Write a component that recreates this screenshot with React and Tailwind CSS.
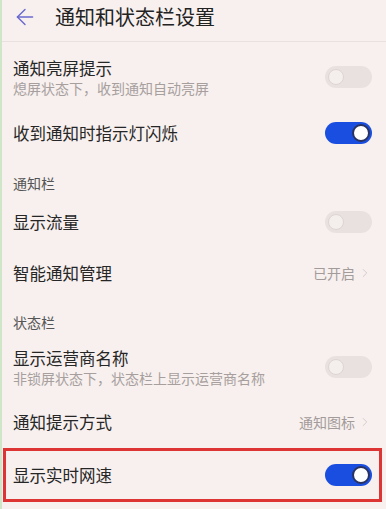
import { ArrowLeft, ChevronRight } from 'lucide-react';

function Toggle({ on }) {
  return on ? (
    <div className="w-[47px] h-[22px] rounded-full bg-[#1a4ee0] flex items-center justify-end pr-[2px]">
      <div className="w-[18px] h-[18px] rounded-full bg-white border-[2px] border-[#2a3360]" />
    </div>
  ) : (
    <div className="w-[47px] h-[22px] rounded-full bg-[#e9e1e0] flex items-center pl-[3px]">
      <div className="w-[16px] h-[16px] rounded-full bg-[#f4eeed] border border-[#ddd5d4]" />
    </div>
  );
}

function Row({ title, sub, right, h }) {
  return (
    <div className={`flex items-center justify-between pl-[11px] pr-[14px] ${h}`}>
      <div className="flex flex-col">
        <span className="text-[16.5px] leading-[22px] text-[#262626]">{title}</span>
        {sub && <span className="text-[14px] leading-[18px] text-[#a79f9e]">{sub}</span>}
      </div>
      {right}
    </div>
  );
}

function Value({ text }) {
  return (
    <div className="flex items-center gap-[3px] text-[14px] text-[#a39b9a]">
      <span>{text}</span>
      <ChevronRight size={14} strokeWidth={1.5} className="text-[#cfc7c6]" />
    </div>
  );
}

export default function App() {
  return (
    <div
      className="w-[386px] h-[509px] bg-[#f7f0ee] border-l-[2px] border-[#cfe6c9] overflow-hidden"
      style={{ fontFamily: '"Noto Sans CJK SC", "Noto Sans", sans-serif' }}
    >
      {/* header */}
      <div className="h-[42px] flex items-center pb-[8px] pl-[10px] border-b border-[#e9e1df]">
        <ArrowLeft size={26} strokeWidth={1.3} className="text-[#6b68cf]" />
        <span className="ml-[17px] text-[20px] text-[#222]">通知和状态栏设置</span>
      </div>

      <Row h="h-[70px]" title="通知亮屏提示" sub="熄屏状态下，收到通知自动亮屏" right={<Toggle />} />
      <Row h="h-[42px]" title="收到通知时指示灯闪烁" right={<Toggle on />} />

      <div className="h-[44px] flex items-end pb-[5px] pl-[11px] text-[14px] leading-[20px] text-[#555]">通知栏</div>
      <Row h="h-[48px]" title="显示流量" right={<Toggle />} />
      <Row h="h-[54px]" title="智能通知管理" right={<Value text="已开启" />} />

      <div className="h-[36px] flex items-end pb-[4px] pl-[11px] text-[14px] leading-[20px] text-[#555]">状态栏</div>
      <Row h="h-[62px]" title="显示运营商名称" sub="非锁屏状态下，状态栏上显示运营商名称" right={<Toggle />} />
      <Row h="h-[48px]" title="通知提示方式" right={<Value text="通知图标" />} />

      <div className="mt-[2px] ml-[1px] mr-[4px] h-[54px] border-[3px] border-[#dd3434] flex items-center justify-between pl-[7px] pr-[7px]">
        <span className="text-[16.5px] leading-[22px] text-[#262626]">显示实时网速</span>
        <Toggle on />
      </div>
    </div>
  );
}
